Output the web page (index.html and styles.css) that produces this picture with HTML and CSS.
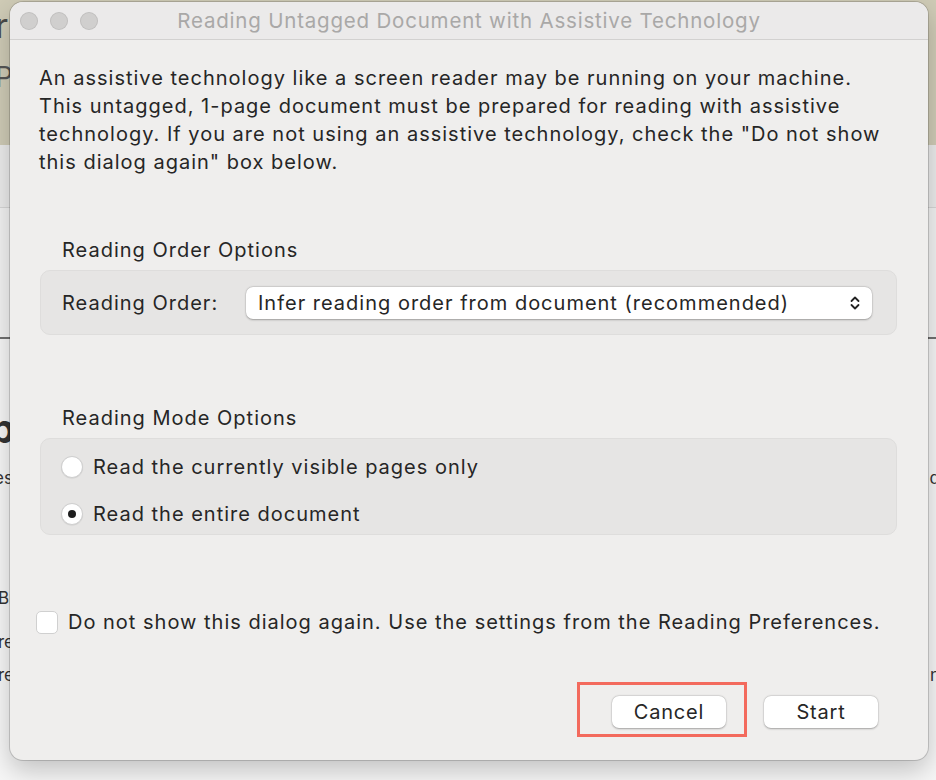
FILE: index.html
```html
<!DOCTYPE html>
<html>
<head>
<meta charset="utf-8">
<link rel="stylesheet" href="styles.css">
</head>
<body>
<div class="backdrop">
  <div class="band band-beige">
    <div class="bg-row bg-r">Reader</div>
    <div class="bg-row bg-p">P</div>
  </div>
  <div class="band band-grey"></div>
  <div class="band band-light"></div>
  <div class="band band-rest">
    <div class="bg-line bg-b"><span class="lft">b</span></div>
    <div class="bg-line bg-es"><span class="lft">es:</span><span class="rgt">d</span></div>
    <div class="bg-line bg-br"><span class="lft">Br</span></div>
    <div class="bg-line bg-re1"><span class="lft">re</span></div>
    <div class="bg-line bg-re2"><span class="lft">re</span><span class="rgt">n</span></div>
  </div>
</div>

<div class="dialog">
  <div class="titlebar">
    <div class="lights"><span class="light"></span><span class="light"></span><span class="light"></span></div>
    <div class="title">Reading Untagged Document with Assistive Technology</div>
    <div></div>
  </div>
  <div class="content">
    <p class="intro">An assistive technology like a screen reader may be running on your machine.<br>This untagged, 1-page document must be prepared for reading with assistive<br>technology. If you are not using an assistive technology, check the "Do not show<br>this dialog again" box below.</p>

    <div class="section sec-order">
      <div class="sec-label">Reading Order Options</div>
      <div class="group group-order">
        <span class="field-label">Reading Order:</span>
        <div class="popup">
          <span>Infer reading order from document (recommended)</span>
          <svg class="chev" width="12" height="16" viewBox="0 0 12 16"><path d="M2.5 6 L6 2.5 L9.5 6 M2.5 10 L6 13.5 L9.5 10" fill="none" stroke="#222" stroke-width="1.8" stroke-linecap="round" stroke-linejoin="round"/></svg>
        </div>
      </div>
    </div>

    <div class="section sec-mode">
      <div class="sec-label">Reading Mode Options</div>
      <div class="group group-mode">
        <div class="radio-row"><span class="radio"></span><span>Read the currently visible pages only</span></div>
        <div class="radio-row"><span class="radio checked"></span><span>Read the entire document</span></div>
      </div>
    </div>

    <div class="check-row"><span class="checkbox"></span><span>Do not show this dialog again. Use the settings from the Reading Preferences.</span></div>

    <div class="buttons">
      <button class="btn">Cancel</button>
      <button class="btn">Start</button>
    </div>
  </div>
</div>
<div class="highlight"></div>
</body>
</html>
```

FILE: styles.css
```css
html, body {
  margin: 0;
  padding: 0;
}
body {
  width: 936px;
  height: 780px;
  overflow: hidden;
  position: relative;
  font-family: "Inter", "Liberation Sans", sans-serif;
  color: #262626;
  background: #f4f4f4;
}

/* backdrop app */
.backdrop {
  display: flex;
  flex-direction: column;
  height: 780px;
}
.band-beige {
  height: 145px;
  background: #cfcbb6;
  color: #4a4a48;
}
.bg-row {
  white-space: nowrap;
}
.bg-r {
  font-size: 34px;
  line-height: 40px;
  margin-top: 6px;
  margin-left: -106px;
}
.bg-p {
  font-size: 28px;
  line-height: 34px;
  margin-top: 14px;
  margin-left: -5px;
  color: #555;
}
.band-grey {
  height: 62px;
  background: #ebebeb;
  border-bottom: 1px solid #d6d6d6;
}
.band-light {
  height: 129px;
  background: #f2f2f2;
  border-bottom: 2px solid #707070;
}
.band-rest {
  flex: 1;
  background: #f6f6f6;
  color: #333;
}
.bg-line {
  display: flex;
  justify-content: space-between;
  white-space: nowrap;
}
.bg-line .lft { margin-left: -2px; }
.bg-line .rgt { margin-right: -4px; }
.bg-b {
  font-size: 40px;
  font-weight: 700;
  line-height: 48px;
  margin-top: 66px;
  margin-left: -8px;
}
.bg-es {
  font-size: 17px;
  line-height: 22px;
  margin-top: 14px;
}
.bg-es .lft { margin-left: -6px; }
.bg-br {
  font-size: 17px;
  line-height: 22px;
  margin-top: 98px;
}
.bg-re1 {
  font-size: 17px;
  line-height: 22px;
  margin-top: 22px;
}
.bg-re2 {
  font-size: 17px;
  line-height: 22px;
  margin-top: 11px;
}

/* dialog window */
.dialog {
  position: absolute;
  left: 10px;
  top: 2px;
  width: 918px;
  height: 758px;
  box-sizing: border-box;
  background: #efeeed;
  border-radius: 13px;
  box-shadow: 0 0 0 1px rgba(0,0,0,0.16), 0 10px 26px rgba(0,0,0,0.22);
  display: flex;
  flex-direction: column;
  overflow: hidden;
}
.titlebar {
  height: 37px;
  border-bottom: 1px solid #d2d1d0;
  display: grid;
  grid-template-columns: 1fr auto 1fr;
  align-items: center;
  background: #ebeaea;
}
.lights {
  display: flex;
  gap: 12px;
  padding-left: 10px;
}
.light {
  width: 18px;
  height: 18px;
  border-radius: 50%;
  background: #d0cfce;
  box-shadow: inset 0 0 0 1px rgba(0,0,0,0.08);
}
.title {
  font-size: 20.5px;
  letter-spacing: 0.8px;
  color: #a9a8a7;
  white-space: nowrap;
}

.content {
  flex: 1;
  display: flex;
  flex-direction: column;
  padding: 0 31px 0 29px;
  font-size: 20px;
  letter-spacing: 1px;
}
.intro {
  margin: 24px 0 0 0;
  line-height: 28px;
  white-space: nowrap;
}
.section {
  display: flex;
  flex-direction: column;
  margin-left: 1px;
}
.sec-order { margin-top: 60px; }
.sec-mode { margin-top: 69px; }
.sec-label {
  line-height: 28px;
  padding-left: 22px;
  margin-bottom: 6px;
}
.group {
  background: #e6e5e4;
  border: 1px solid #dedddc;
  border-radius: 10px;
  box-sizing: border-box;
}
.group-order {
  height: 65px;
  display: flex;
  align-items: center;
  padding: 0 24px 0 21px;
}
.field-label {
  width: 184px;
  flex: none;
  line-height: 28px;
}
.popup {
  flex: 1;
  height: 32px;
  background: #fff;
  border-radius: 7px;
  box-shadow: 0 0.5px 2px rgba(0,0,0,0.3), 0 0 0 0.5px rgba(0,0,0,0.06);
  display: flex;
  align-items: center;
  justify-content: space-between;
  padding: 0 11px 0 12px;
  white-space: nowrap;
}
.chev { flex: none; }

.group-mode {
  height: 97px;
  display: flex;
  flex-direction: column;
  padding: 14px 0 0 20px;
  gap: 19px;
}
.radio-row {
  display: flex;
  align-items: center;
  gap: 10px;
  line-height: 28px;
}
.radio {
  width: 22px;
  height: 22px;
  border-radius: 50%;
  background: #fff;
  box-sizing: border-box;
  border: 1px solid #cfcfcf;
  box-shadow: 0 0.5px 1px rgba(0,0,0,0.1);
  display: flex;
  align-items: center;
  justify-content: center;
  flex: none;
}
.radio.checked::after {
  content: "";
  width: 8px;
  height: 8px;
  border-radius: 50%;
  background: #1e1e1e;
}

.check-row {
  display: flex;
  align-items: center;
  gap: 10px;
  margin-top: 73px;
  margin-left: -3px;
  line-height: 28px;
  white-space: nowrap;
}
.checkbox {
  width: 22px;
  height: 23px;
  box-sizing: border-box;
  border-radius: 5px;
  background: #fff;
  border: 1px solid #d0d0d0;
  flex: none;
}

.buttons {
  display: flex;
  justify-content: flex-end;
  gap: 38px;
  margin-top: auto;
  margin-bottom: 32px;
  padding-right: 19px;
}
.btn {
  width: 114px;
  height: 32px;
  border: none;
  border-radius: 7px;
  background: #fff;
  font-family: inherit;
  font-size: 20px;
  letter-spacing: 0.8px;
  color: #262626;
  box-shadow: 0 0.5px 2px rgba(0,0,0,0.3), 0 0 0 0.5px rgba(0,0,0,0.06);
  padding: 0;
}

.highlight {
  position: absolute;
  left: 577px;
  top: 682px;
  width: 170px;
  height: 55px;
  box-sizing: border-box;
  border: 3px solid #f36a5d;
}
```
